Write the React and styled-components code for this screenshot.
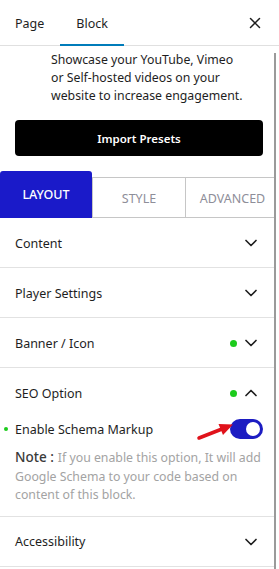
import styled, { createGlobalStyle } from "styled-components";
import { X, ChevronDown, ChevronUp } from "lucide-react";

const GlobalStyle = createGlobalStyle`
  body {
    margin: 0;
    background: #fff;
    font-family: "Noto Sans", "Open Sans", Arial, sans-serif;
    color: #1e1e1e;
  }
`;

const sections = [
  { title: "Content" },
  { title: "Player Settings" },
  { title: "Banner / Icon", dot: true },
];

const App = () => {
  return (
    <Panel>
      <GlobalStyle />
      <Header>
        <HeaderTab>Page</HeaderTab>
        <HeaderTab $active>Block</HeaderTab>
        <CloseButton>
          <X size={18} strokeWidth={2} />
        </CloseButton>
      </Header>
      <Body>
        <Main>
          <Description>
            Showcase your YouTube, Vimeo
            <br />
            or Self-hosted videos on your
            <br />
            website to increase engagement.
          </Description>
          <ImportButton>Import Presets</ImportButton>
          <PanelTabs>
            <PanelTab $active>LAYOUT</PanelTab>
            <PanelTab>STYLE</PanelTab>
            <PanelTab $last>ADVANCED</PanelTab>
          </PanelTabs>
          {sections.map((s) => (
            <Section key={s.title}>
              <SectionHead>
                <span>{s.title}</span>
                <HeadRight>
                  {s.dot && <Dot />}
                  <ChevronDown size={20} strokeWidth={2} />
                </HeadRight>
              </SectionHead>
            </Section>
          ))}
          <Section>
            <SectionHead>
              <span>SEO Option</span>
              <HeadRight>
                <Dot />
                <ChevronUp size={20} strokeWidth={2} />
              </HeadRight>
            </SectionHead>
            <SectionBody>
              <ToggleRow>
                <Bullet />
                <ToggleLabel>Enable Schema Markup</ToggleLabel>
                <Arrow width="38" height="20" viewBox="0 0 38 20">
                  <line
                    x1="3"
                    y1="17"
                    x2="26"
                    y2="8"
                    stroke="#e0121b"
                    strokeWidth="3.5"
                    strokeLinecap="round"
                  />
                  <polygon points="37,3.5 27,14 22.5,3" fill="#e0121b" />
                </Arrow>
                <Toggle>
                  <Knob />
                </Toggle>
              </ToggleRow>
              <Note>
                <NoteLabel>Note :</NoteLabel>If you enable this option, It
                will add Google Schema to your code based on content of this
                block.
              </Note>
            </SectionBody>
          </Section>
          <Section>
            <SectionHead>
              <span>Accessibility</span>
              <HeadRight>
                <ChevronDown size={20} strokeWidth={2} />
              </HeadRight>
            </SectionHead>
          </Section>
        </Main>
        <Track>
          <Thumb />
        </Track>
      </Body>
    </Panel>
  );
};

const Panel = styled.div`
  width: 279px;
  height: 569px;
  overflow: hidden;
  display: flex;
  flex-direction: column;
  background: #fff;
`;

const Header = styled.div`
  height: 45px;
  flex-shrink: 0;
  display: flex;
  align-items: stretch;
  border-bottom: 1px solid #e0e0e0;
`;

const HeaderTab = styled.div`
  display: flex;
  align-items: center;
  padding: 0 16px;
  font-size: 12.5px;
  color: #1e1e1e;
  box-shadow: ${(p) => (p.$active ? "inset 0 -2px 0 #007cba" : "none")};
  margin-bottom: -1px;
  &:first-child {
    padding-left: 15px;
  }
`;

const CloseButton = styled.div`
  margin-left: auto;
  margin-right: 15px;
  display: flex;
  align-items: center;
  color: #1e1e1e;
`;

const Body = styled.div`
  flex: 1;
  display: flex;
  min-height: 0;
`;

const Main = styled.div`
  width: 274px;
  flex-shrink: 0;
  display: flex;
  flex-direction: column;
`;

const Track = styled.div`
  width: 5px;
  padding-top: 7px;
`;

const Thumb = styled.div`
  width: 2px;
  height: 100%;
  background: #9a9a9a;
`;

const Description = styled.p`
  margin: 0;
  padding: 5px 0 0 51px;
  font-size: 12.3px;
  line-height: 18px;
  color: #1e1e1e;
`;

const ImportButton = styled.button`
  margin: 15px 11px 0 15px;
  height: 36px;
  border: none;
  border-radius: 4px;
  background: #000;
  color: #fff;
  font-family: inherit;
  font-size: 11.5px;
  font-weight: 600;
`;

const PanelTabs = styled.div`
  margin-top: 15px;
  display: flex;
  align-items: flex-end;
`;

const PanelTab = styled.div`
  width: ${(p) => (p.$active ? "92px" : p.$last ? "89px" : "93px")};
  height: ${(p) => (p.$active ? "47px" : "41px")};
  box-sizing: border-box;
  display: flex;
  align-items: center;
  justify-content: center;
  padding-left: ${(p) => (p.$last ? "5px" : "0")};
  padding-top: ${(p) => (p.$active ? "0" : "1px")};
  font-size: 12.5px;
  font-weight: ${(p) => (p.$active ? 500 : 400)};
  background: ${(p) => (p.$active ? "#1a1ac9" : "#fff")};
  color: ${(p) => (p.$active ? "#fff" : "#8e8e99")};
  border: ${(p) => (p.$active ? "none" : "1px solid #c6c6c6")};
  border-right: none;
  border-radius: ${(p) => (p.$active ? "3px 3px 0 0" : "0")};
`;

const Section = styled.div`
  border-bottom: 1px solid #e2e2e2;
`;

const SectionHead = styled.div`
  height: 49px;
  display: flex;
  align-items: center;
  justify-content: space-between;
  padding: 1px 13px 0 15px;
  box-sizing: border-box;
  font-size: 12.5px;
  color: #1e1e1e;
`;

const HeadRight = styled.div`
  display: flex;
  align-items: center;
  gap: 4px;
  color: #1e1e1e;
`;

const Dot = styled.span`
  width: 7px;
  height: 7px;
  border-radius: 50%;
  background: #1ccb1c;
`;

const SectionBody = styled.div`
  padding: 2px 11px 11px 4px;
`;

const ToggleRow = styled.div`
  position: relative;
  height: 20px;
  display: flex;
  align-items: center;
`;

const Bullet = styled.span`
  width: 4px;
  height: 4px;
  border-radius: 50%;
  background: #1ccb1c;
  margin-right: 7px;
`;

const ToggleLabel = styled.span`
  font-size: 12.5px;
  color: #1e1e1e;
`;

const Arrow = styled.svg`
  position: absolute;
  left: 192px;
  top: 2px;
`;

const Toggle = styled.div`
  margin-left: auto;
  width: 33px;
  height: 20px;
  border-radius: 10px;
  background: #1c1cc2;
  display: flex;
  align-items: center;
  justify-content: flex-end;
  padding-right: 3px;
  box-sizing: border-box;
`;

const Knob = styled.span`
  width: 14px;
  height: 14px;
  border-radius: 50%;
  background: #fff;
`;

const Note = styled.p`
  margin: 9px 0 0 11px;
  font-size: 12.3px;
  line-height: 18.5px;
  color: #a3a3a3;
`;

const NoteLabel = styled.span`
  font-size: 13.5px;
  font-weight: 500;
  color: #3a3a3a;
  margin-right: 4px;
`;

export default App;
